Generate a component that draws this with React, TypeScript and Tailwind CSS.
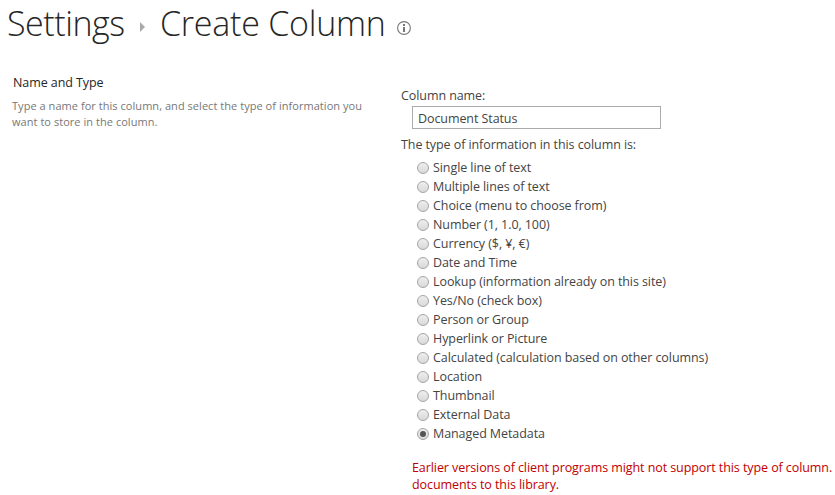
const types = [
  "Single line of text",
  "Multiple lines of text",
  "Choice (menu to choose from)",
  "Number (1, 1.0, 100)",
  "Currency ($, ¥, €)",
  "Date and Time",
  "Lookup (information already on this site)",
  "Yes/No (check box)",
  "Person or Group",
  "Hyperlink or Picture",
  "Calculated (calculation based on other columns)",
  "Location",
  "Thumbnail",
  "External Data",
  "Managed Metadata",
];

function Radio({ label, checked }: { label: string; checked: boolean }) {
  return (
    <label className="flex h-[19px] items-center gap-1">
      <span className="mt-px flex size-3 items-center justify-center rounded-full border border-[#a5a5a5] bg-linear-to-b from-[#eeeeee] to-[#d9d9d9]">
        {checked && <span className="size-1.5 rounded-full bg-[#555555]" />}
      </span>
      <span className="pt-0.5">{label}</span>
    </label>
  );
}

export default function App() {
  return (
    <div className="h-[495px] w-[835px] overflow-hidden bg-white font-['Open_Sans','Noto_Sans',sans-serif] text-[12.5px] tracking-[-0.08px] whitespace-nowrap text-[#444444]">
      <header className="flex h-[70px] items-start pl-[7px] text-[34px] leading-[46px] font-light text-[#262626]">
        <h1 className="w-[133px] tracking-[-0.45px]">Settings</h1>
        <svg className="mt-[22px] mr-[15px] h-[10px] w-[5px]" viewBox="0 0 5 10" fill="#aaaaaa">
          <path d="M0 0 5 5 0 10Z" />
        </svg>
        <h1 className="w-[237px] tracking-[-0.25px]">Create Column</h1>
        <svg className="mt-[21px] size-[14px]" viewBox="0 0 14 14" fill="none">
          <circle cx="7" cy="7" r="6.4" stroke="#777777" strokeWidth="1.1" />
          <path d="M6 3h2v2H6zM6 6h2v5H6z" fill="#777777" />
        </svg>
      </header>
      <main className="flex">
        <section className="w-[401px] shrink-0 pl-3">
          <h2 className="pt-[3px] pl-px leading-5 text-[#262626]">Name and Type</h2>
          <p className="pt-[5px] text-[11px] leading-4 tracking-[0.045px] text-[#777777]">
            Type a name for this column, and select the type of information you
            <br />
            want to store in the column.
          </p>
        </section>
        <section className="shrink-0 pt-4">
          <div className="leading-5">Column name:</div>
          <div className="ml-[11px] flex h-[23px] w-[249px] items-center border border-[#ababab] pt-[3px] pl-[5px]">
            Document Status
          </div>
          <div className="pt-1.5 leading-5">The type of information in this column is:</div>
          <div className="pt-[3px] pl-4">
            {types.map((t) => (
              <Radio key={t} label={t} checked={t === "Managed Metadata"} />
            ))}
          </div>
          <p className="pt-4 pl-[11px] leading-[17px] text-[#bf0000]">
            Earlier versions of client programs might not support this type of column.
            <br />
            documents to this library.
          </p>
        </section>
      </main>
    </div>
  );
}
